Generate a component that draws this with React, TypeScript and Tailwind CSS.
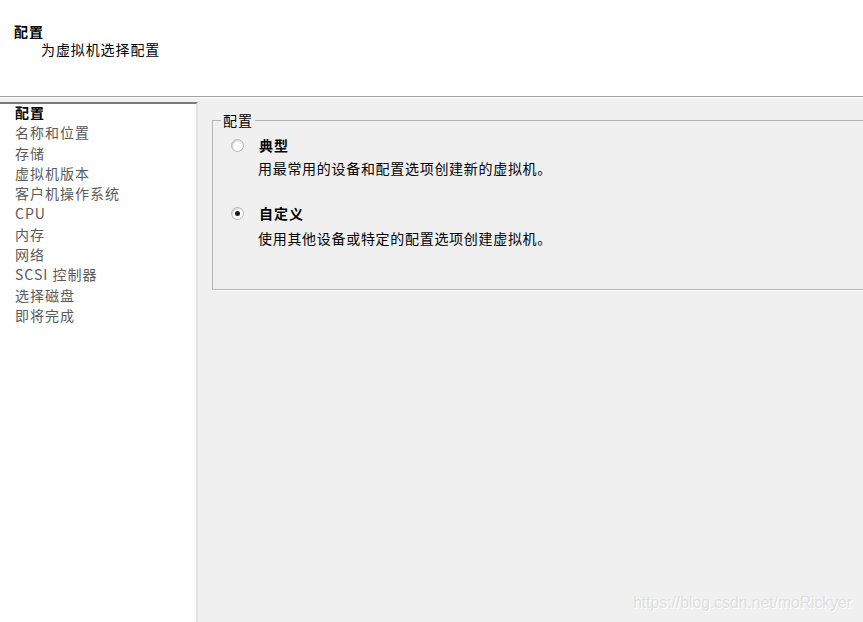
import React from "react";

const font = { fontFamily: '"Noto Sans CJK SC", "Liberation Sans", sans-serif' };

function Radio({ checked }: { checked?: boolean }) {
  return (
    <span className="relative inline-flex h-[13px] w-[13px] shrink-0 items-center justify-center rounded-full border border-[#b8b8b8] bg-white shadow-[inset_1px_1px_1px_#d0d0d0]">
      {checked && <span className="h-[5px] w-[5px] rounded-full bg-[#1a1a1a]" />}
    </span>
  );
}

const navItems = [
  "名称和位置",
  "存储",
  "虚拟机版本",
  "客户机操作系统",
  "CPU",
  "内存",
  "网络",
  "SCSI 控制器",
  "选择磁盘",
  "即将完成",
];

export default function App() {
  return (
    <div
      className="flex h-[622px] w-[863px] flex-col overflow-hidden bg-[#f0f0f0] text-[13px] text-black"
      style={font}
    >
      {/* header */}
      <div className="h-[96px] bg-white pl-[14px] pt-[22px]">
        <div className="text-[14px] font-bold leading-[18px] tracking-[1px]">配置</div>
        <div className="pl-[27px] text-[14px] leading-[18px] tracking-[0.9px]">为虚拟机选择配置</div>
      </div>
      <div className="h-[2px] border-t border-b border-t-[#a0a0a0] border-b-white" />

      <div className="flex flex-1 pt-[4px]">
        {/* nav */}
        <div className="w-[198px] border-t-2 border-r-2 border-t-[#7a7a7a] border-r-[#e3e3e3] bg-white pl-[15px]">
          <div className="-mt-[2px] text-[14px] font-bold leading-[20.3px] tracking-[1px]">配置</div>
          {navItems.map((t) => (
            <div key={t} className="text-[14px] leading-[20.3px] tracking-[1px] text-[#5a5a5a]">
              {t}
            </div>
          ))}
        </div>

        {/* content */}
        <div className="relative flex-1 overflow-hidden pl-[14px] pt-[9px]">
          <fieldset className="h-[179px] w-[700px] border border-[#b4b4b4] pl-[8px] pr-0 pt-0 shadow-[1px_1px_0_#ffffff]">
            <legend className="px-[2px] text-[14px] leading-[18px] tracking-[1px]">配置</legend>
            <div className="mt-[7px] flex items-center gap-[15px] pl-[10px]">
              <Radio />
              <span className="text-[14px] font-bold leading-[18px] tracking-[1px]">典型</span>
            </div>
            <div className="mt-[5px] pl-[37px] text-[14px] leading-[18px] tracking-[0.7px]">
              用最常用的设备和配置选项创建新的虚拟机。
            </div>
            <div className="mt-[27px] flex items-center gap-[15px] pl-[10px]">
              <Radio checked />
              <span className="text-[14px] font-bold leading-[18px] tracking-[1px]">自定义</span>
            </div>
            <div className="mt-[7px] pl-[37px] text-[14px] leading-[18px] tracking-[0.7px]">
              使用其他设备或特定的配置选项创建虚拟机。
            </div>
          </fieldset>
          <div
            className="absolute bottom-[7px] right-[11px] text-[15.7px] text-[#dedede] [text-shadow:1px_1px_0_#ffffff]"
            style={{ fontFamily: '"Liberation Sans", Arial, sans-serif' }}
          >
            https://blog.csdn.net/moRickyer
          </div>
        </div>
      </div>
    </div>
  );
}
